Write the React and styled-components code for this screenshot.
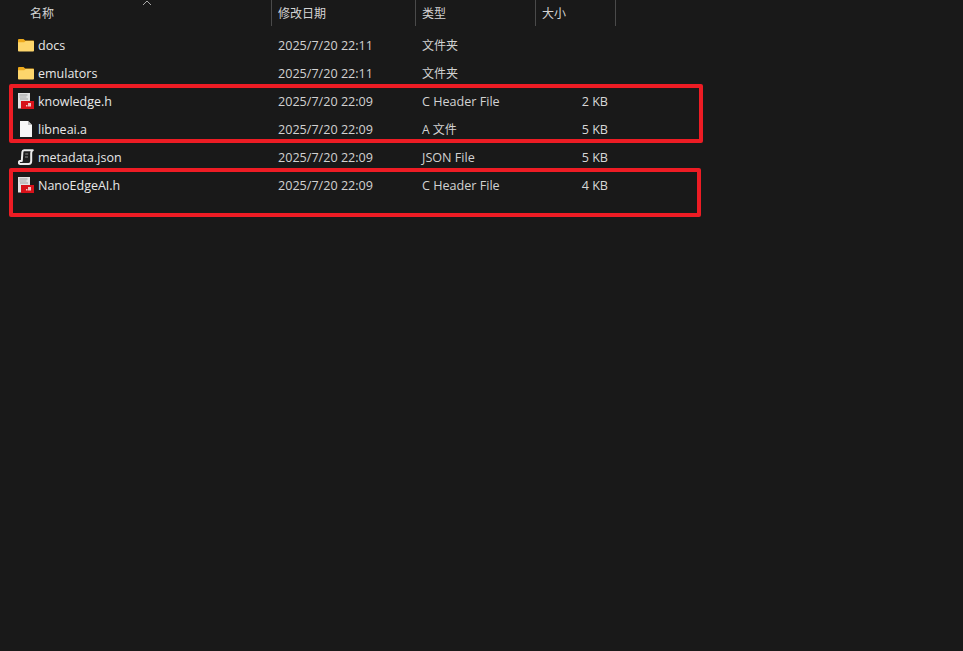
import React from 'react'
import styled, { createGlobalStyle } from 'styled-components'

const GlobalStyle = createGlobalStyle`
    html, body {
        margin: 0;
        padding: 0;
        height: 100%;
        background: #191919;
    }
`;

const Page = styled.div`
    position: relative;
    width: 963px;
    height: 651px;
    overflow: hidden;
    background: #191919;
    color: #dedede;
    font-family: "Open Sans", "Noto Sans CJK SC", sans-serif;
    font-size: 12px;
`;

const Header = styled.div`
    position: relative;
    display: grid;
    grid-template-columns: 272px 144px 120px 80px;
    height: 27px;
    margin-bottom: 4px;
`;

const HeaderCell = styled.div`
    display: flex;
    align-items: center;
    height: 26px;
    padding-left: ${props => props.$pad || 6}px;
    border-right: 1px solid #4a4a4a;
    color: #d4d4d4;
    box-sizing: border-box;
`;

const SortArrow = styled.svg`
    position: absolute;
    left: 142px;
    top: 0;
    width: 10px;
    height: 6px;
`;

const List = styled.div`
    display: flex;
    flex-direction: column;
`;

const Row = styled.div`
    display: grid;
    grid-template-columns: 271px 144px 113px 80px;
    align-items: center;
    height: 28px;
`;

const NameCell = styled.div`
    display: flex;
    align-items: center;
    gap: 4px;
    padding-left: 18px;
    font-size: 12.5px;
    color: #e8e8e8;
`;

const Cell = styled.div`
    padding-left: 7px;
    white-space: nowrap;
    color: #d2d2d2;
    font-size: ${props => props.$latin ? '12.6px' : '12px'};
`;

const SizeCell = styled.div`
    text-align: right;
    white-space: nowrap;
    color: #d8d8d8;
    font-size: 12.6px;
`;

const IconBox = styled.svg`
    width: 16px;
    height: 16px;
    flex: none;
`;

const RedBox = styled.div`
    position: absolute;
    left: ${props => props.$x}px;
    top: ${props => props.$y}px;
    width: ${props => props.$w}px;
    height: ${props => props.$h}px;
    border: 4px solid #ed1c24;
    border-radius: 2px;
    box-sizing: border-box;
`;

function FolderIcon() {
    return (
        <IconBox viewBox="0 0 16 16">
            <path d="M0 3.2C0 2.5.5 2 1.2 2h4.3l1.7 1.6H15c.6 0 1 .4 1 1V6H0z" fill="#eeaa1c" />
            <path d="M0 5.2h6.2l1.4-1.2h7.2c.7 0 1.2.5 1.2 1.2v8.2c0 .7-.5 1.2-1.2 1.2H1.2C.5 14.6 0 14.1 0 13.4z" fill="#fdd66c" />
        </IconBox>
    )
}

function HeaderFileIcon() {
    return (
        <IconBox viewBox="0 0 16 16">
            <rect x="0" y="0" width="12" height="15.5" fill="#e2e2e2" />
            <rect x="1.5" y="1.5" width="8" height="1" fill="#9a9a9a" />
            <rect x="1.5" y="3.5" width="7" height="1" fill="#aaaaaa" />
            <rect x="2" y="5.5" width="8" height="1" fill="#a0a0a0" />
            <rect x="3" y="8" width="13" height="8" fill="#d8121a" />
            <rect x="10" y="10" width="3" height="3.5" fill="#f2c4c4" />
            <rect x="8" y="12" width="1.5" height="1.5" fill="#f2c4c4" />
        </IconBox>
    )
}

function BlankFileIcon() {
    return (
        <IconBox viewBox="0 0 16 16">
            <path d="M2 0h8l4 4v12H2z" fill="#f6f6f6" />
            <path d="M10 0v4h4z" fill="#bdbdbd" />
        </IconBox>
    )
}

function ScriptIcon() {
    return (
        <IconBox viewBox="0 0 16 16">
            <path d="M6 1.200h8.800c-1 .6-1.600 1.600-1.600 2.800v8c0 1.800-1 2.900-2.600 2.900H2.200c-1 0-1.400-.6-1.400-1.400 0-.8.400-1.300 1.200-1.500h1.800L4.400 3C4.600 1.700 5 1.200 6 1.200z" fill="#1e1e1e" stroke="#ececec" strokeWidth="2" strokeLinejoin="round" />
            <path d="M7.200 5h3M7 8h3" stroke="#8c8c8c" strokeWidth="1" />
        </IconBox>
    )
}

const files = [
    { name: 'docs', date: '2025/7/20 22:11', type: '文件夹', size: '', Icon: FolderIcon },
    { name: 'emulators', date: '2025/7/20 22:11', type: '文件夹', size: '', Icon: FolderIcon },
    { name: 'knowledge.h', date: '2025/7/20 22:09', type: 'C Header File', latin: true, size: '2 KB', Icon: HeaderFileIcon },
    { name: 'libneai.a', date: '2025/7/20 22:09', type: 'A 文件', size: '5 KB', Icon: BlankFileIcon },
    { name: 'metadata.json', date: '2025/7/20 22:09', type: 'JSON File', latin: true, size: '5 KB', Icon: ScriptIcon },
    { name: 'NanoEdgeAI.h', date: '2025/7/20 22:09', type: 'C Header File', latin: true, size: '4 KB', Icon: HeaderFileIcon },
]

function App() {
    return (
        <Page>
            <GlobalStyle />
            <Header>
                <HeaderCell $pad={30}>名称</HeaderCell>
                <HeaderCell>修改日期</HeaderCell>
                <HeaderCell>类型</HeaderCell>
                <HeaderCell>大小</HeaderCell>
                <SortArrow viewBox="0 0 10 6">
                    <path d="M1 5l4-4 4 4" fill="none" stroke="#a8a8a8" strokeWidth="1" />
                </SortArrow>
            </Header>
            <List>
                {files.map(file => (
                    <Row key={file.name}>
                        <NameCell>
                            <file.Icon />
                            {file.name}
                        </NameCell>
                        <Cell $latin>{file.date}</Cell>
                        <Cell $latin={file.latin}>{file.type}</Cell>
                        <SizeCell>{file.size}</SizeCell>
                    </Row>
                ))}
            </List>
            <RedBox $x={9} $y={84} $w={694} $h={59} />
            <RedBox $x={9} $y={168} $w={692} $h={49} />
        </Page>
    )
}

export default App
